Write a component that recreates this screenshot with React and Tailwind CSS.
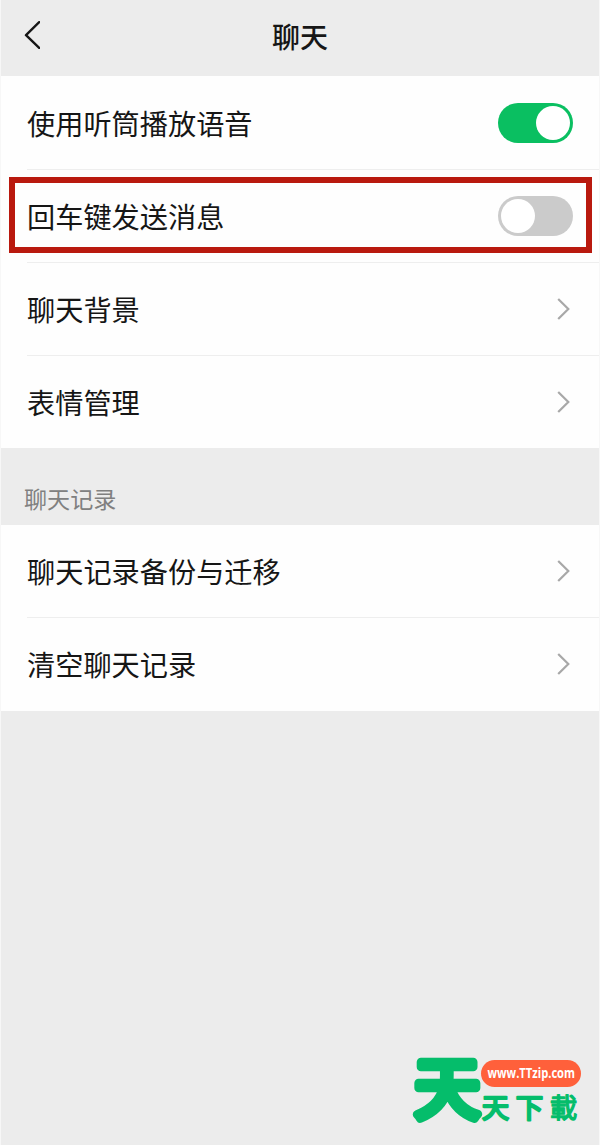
import React, { useState } from "react";

export default function ChatSettings() {
  const [earpiece, setEarpiece] = useState(true);
  const [enterToSend, setEnterToSend] = useState(false);

  return (
    <div className="relative flex h-[1145px] w-[600px] flex-col overflow-hidden border-x border-[#f7f7f7] bg-[#ececec] font-['Noto_Sans_CJK_SC',sans-serif] text-[#161616]">
      <header className="grid h-[76px] shrink-0 grid-cols-[1fr_auto_1fr] items-center px-[23px]">
        <button aria-label="返回" className="-mt-1.5 w-4">
          <svg width="16" height="28" viewBox="0 0 16 28" fill="none" stroke="#161616" strokeWidth="2.4" strokeLinecap="round" strokeLinejoin="round">
            <path d="M15.2 1.2 2 14.2 15.2 27" />
          </svg>
        </button>
        <h1 className="-mt-1 text-[28px] leading-none font-medium">聊天</h1>
      </header>

      <section className="h-[372px] shrink-0 bg-[#fefefe] pt-px">
        <Row label="使用听筒播放语音">
          <Toggle on={earpiece} onChange={setEarpiece} />
        </Row>
        <Row label="回车键发送消息" highlighted>
          <Toggle on={enterToSend} onChange={setEnterToSend} />
        </Row>
        <Row label="聊天背景"><Chevron /></Row>
        <Row label="表情管理" last><Chevron /></Row>
      </section>

      <h2 className="flex h-[77px] shrink-0 items-end pb-[15px] pl-[23px] text-[23.1px] leading-[23px] text-[#808080]">聊天记录</h2>

      <section className="h-[186px] shrink-0 bg-[#fefefe]">
        <Row label="聊天记录备份与迁移"><Chevron /></Row>
        <Row label="清空聊天记录" last><Chevron /></Row>
      </section>

      <Watermark />
    </div>
  );
}

function Row({ label, children, highlighted, last }) {
  return (
    <div className={`relative pl-[26px] ${last ? "h-[92px]" : "h-[93px]"}`}>
      <div className={`flex h-full items-center justify-between pr-[26px] ${last ? "" : "border-b border-[#eeeeee]"}`}>
        <span className="text-[28.2px] leading-none">{label}</span>
        {children}
      </div>
      {highlighted && <div className="pointer-events-none absolute top-[7px] right-[7px] bottom-[10px] left-[7.5px] border-[6px] border-[#b9190e]" />}
    </div>
  );
}

function Toggle({ on, onChange }) {
  return (
    <button
      role="switch"
      aria-checked={on}
      onClick={() => onChange(!on)}
      className={`flex h-10 w-[75px] items-center rounded-full px-[3px] ${on ? "justify-end bg-[#0abf61]" : "justify-start bg-[#cbcbcb]"}`}
    >
      <span className="size-[34px] rounded-full bg-white" />
    </button>
  );
}

function Chevron() {
  return (
    <svg className="mr-[3px]" width="13" height="22" viewBox="0 0 13 22" fill="none" stroke="#a8a8a8" strokeWidth="2.2">
      <path d="M1.2 1 11.3 11 1.2 21" />
    </svg>
  );
}

function Watermark() {
  return (
    <svg className="absolute -right-px bottom-0" width="200" height="125" viewBox="0 -20 200 125">
      <g fill="#05bd6b" stroke="#05bd6b" strokeLinejoin="round" strokeLinecap="round" textAnchor="middle" fontFamily="'Noto Sans CJK SC', sans-serif">
        <text x="47.3" y="73.3" fontSize="66" strokeWidth="8.5">天</text>
        <text x="95.5" y="78" fontSize="27.5" strokeWidth="2.2">天</text>
        <text x="129.5" y="78" fontSize="27.5" strokeWidth="2.2">下</text>
        <text x="163.5" y="78" fontSize="27.5" strokeWidth="1.3">載</text>
      </g>
      <rect x="81" y="20" width="100" height="27" rx="13.5" fill="#ff603b" />
      <text x="87.5" y="38" fontSize="13.5" fontWeight="700" fill="#fff" fontFamily="'Open Sans', sans-serif" textLength="87.5" lengthAdjust="spacingAndGlyphs">www.TTzip.com</text>
    </svg>
  );
}
